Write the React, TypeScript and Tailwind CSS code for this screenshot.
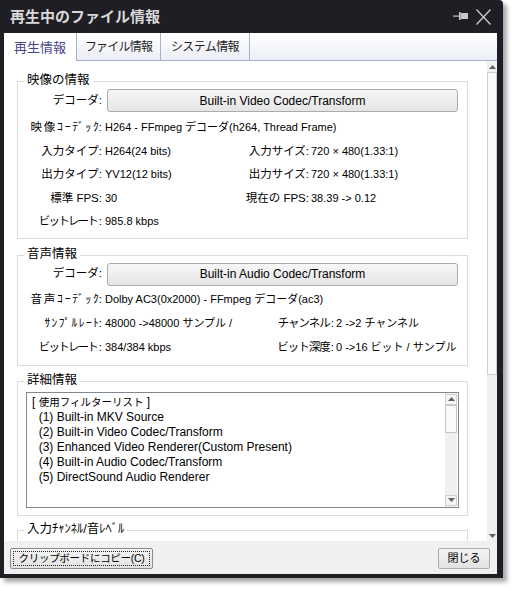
import React from "react";

function UpTri() {
  return (
    <svg width="7" height="4" viewBox="0 0 7 4">
      <path d="M0 4 L3.5 0 L7 4 Z" fill="#606060" />
    </svg>
  );
}
function DownTri() {
  return (
    <svg width="7" height="4" viewBox="0 0 7 4">
      <path d="M0 0 L7 0 L3.5 4 Z" fill="#606060" />
    </svg>
  );
}

function GroupBox({
  title,
  className,
  children,
}: {
  title: string;
  className: string;
  children?: React.ReactNode;
}) {
  return (
    <div className={"relative border border-[#dcdcdc] w-[451px] ml-[13px] shrink-0 " + className}>
      <span className="absolute left-[6px] -top-[10px] px-[3px] bg-white text-[12.5px] leading-[17px] text-black whitespace-nowrap">
        {title}
      </span>
      {children}
    </div>
  );
}

function DecoderRow({ text }: { text: string }) {
  return (
    <div className="flex items-center pt-[7px]">
      <span className="w-[84px] shrink-0 text-right text-[11.5px] leading-none">デコーダ:</span>
      <div className="ml-[5px] w-[351px] h-[23px] border border-[#acacac] rounded-[3px] bg-gradient-to-b from-[#f7f7f7] to-[#e5e5e5] flex items-center justify-center text-[12px] leading-none">
        {text}
      </div>
    </div>
  );
}

export default function App() {
  return (
    <div className="w-[512px] h-[591px] bg-white font-['Liberation_Sans','Noto_Sans_CJK_JP',sans-serif] text-black overflow-hidden">
      <div className="w-[503px] h-[578px] bg-[#1e1e24] rounded-tr-[4px] flex flex-col shadow-[4px_4px_4px_rgba(0,0,0,0.35)]">
        {/* Title bar */}
        <div className="h-[33px] shrink-0 flex items-center pl-[10px] pr-[12px]">
          <span className="text-[15px] font-bold text-[#d8d8d8] leading-none">再生中のファイル情報</span>
          <div className="ml-auto flex items-center gap-[8px]">
            <svg width="15" height="8" viewBox="0 0 15 8" className="mt-[-1px]">
              <rect x="0" y="3.5" width="6" height="1.2" fill="#c8c8c8" />
              <rect x="6" y="0" width="1.6" height="8" fill="#c8c8c8" />
              <rect x="7.6" y="1" width="7.4" height="6" fill="#c8c8c8" />
            </svg>
            <svg width="15" height="16" viewBox="0 0 15 16">
              <path d="M0.5 0.5 L14.5 15.5 M14.5 0.5 L0.5 15.5" stroke="#c8c8c8" strokeWidth="1.4" />
            </svg>
          </div>
        </div>

        {/* Client */}
        <div className="flex-1 min-h-0 ml-[4px] mr-[6px] mb-[4px] bg-white flex flex-col">
          {/* Tabs */}
          <div className="h-[28px] shrink-0 flex border-b border-[#a8b0c4] bg-gradient-to-b from-white to-[#eceef6]">
            <div className="w-[73px] h-[28px] bg-white border-r border-[#a8b0c4] flex items-center justify-center text-[13px] leading-none text-[#45458a]">
              再生情報
            </div>
            <div className="w-[84px] h-[27px] border-r border-[#a8b0c4] flex items-center justify-center text-[12px] tracking-[-0.8px] leading-none text-[#1e1e1e]">
              ファイル情報
            </div>
            <div className="w-[89px] h-[27px] border-r border-[#a8b0c4] flex items-center justify-center text-[12px] tracking-[-0.6px] leading-none text-[#1e1e1e]">
              システム情報
            </div>
          </div>

          {/* Content + scrollbar */}
          <div className="flex-1 min-h-0 flex">
            <div className="flex-1 overflow-hidden bg-white flex flex-col">
              {/* 映像の情報 */}
              <GroupBox title="映像の情報" className="mt-[20px] pb-[4px]">
                <DecoderRow text="Built-in Video Codec/Transform" />
                <div className="mt-[4px] flex flex-col whitespace-nowrap">
                  <div className="h-[23.5px] flex items-center">
                    <span className="w-[84px] shrink-0 text-right text-[11.5px] leading-none">
                      <span className="tracking-[1.8px]">映像ｺｰﾃﾞｯ</span>ｸ:
                    </span>
                    <span className="ml-[3px] text-[11px] leading-none">H264 - FFmpeg デコーダ(h264, Thread Frame)</span>
                  </div>
                  <div className="h-[23.5px] flex items-center">
                    <div className="w-[212px] shrink-0 flex items-center">
                      <span className="w-[84px] shrink-0 text-right text-[11.5px] leading-none">入力タイプ:</span>
                      <span className="ml-[3px] text-[11px] leading-none">H264(24 bits)</span>
                    </div>
                    <span className="w-[79px] shrink-0 text-right text-[11.5px] leading-none">入力サイズ:</span>
                    <span className="ml-[2px] text-[11px] leading-none">720 × 480(1.33:1)</span>
                  </div>
                  <div className="h-[23.5px] flex items-center">
                    <div className="w-[212px] shrink-0 flex items-center">
                      <span className="w-[84px] shrink-0 text-right text-[11.5px] leading-none">出力タイプ:</span>
                      <span className="ml-[3px] text-[11px] leading-none">YV12(12 bits)</span>
                    </div>
                    <span className="w-[79px] shrink-0 text-right text-[11.5px] leading-none">出力サイズ:</span>
                    <span className="ml-[2px] text-[11px] leading-none">720 × 480(1.33:1)</span>
                  </div>
                  <div className="h-[23.5px] flex items-center">
                    <div className="w-[212px] shrink-0 flex items-center">
                      <span className="w-[84px] shrink-0 text-right text-[11.5px] leading-none">標準 FPS:</span>
                      <span className="ml-[3px] text-[11px] leading-none">30</span>
                    </div>
                    <span className="w-[79px] shrink-0 text-right text-[11.5px] leading-none">現在の FPS:</span>
                    <span className="ml-[2px] text-[11px] leading-none">38.39 -&gt; 0.12</span>
                  </div>
                  <div className="h-[23.5px] flex items-center">
                    <span className="w-[84px] shrink-0 text-right text-[11.5px] leading-none">
                      <span className="tracking-[-1.8px]">ビットレー</span>ト:
                    </span>
                    <span className="ml-[3px] text-[11px] leading-none">985.8 kbps</span>
                  </div>
                </div>
              </GroupBox>

              {/* 音声情報 */}
              <GroupBox title="音声情報" className="mt-[16px] pb-[5px]">
                <DecoderRow text="Built-in Audio Codec/Transform" />
                <div className="mt-[2px] flex flex-col whitespace-nowrap">
                  <div className="h-[24px] flex items-center">
                    <span className="w-[84px] shrink-0 text-right text-[11.5px] leading-none">
                      <span className="tracking-[1.8px]">音声ｺｰﾃﾞｯ</span>ｸ:
                    </span>
                    <span className="ml-[3px] text-[11px] leading-none">Dolby AC3(0x2000) - FFmpeg デコーダ(ac3)</span>
                  </div>
                  <div className="h-[24px] flex items-center">
                    <div className="w-[250px] shrink-0 flex items-center">
                      <span className="w-[84px] shrink-0 text-right text-[11.5px] leading-none">
                        <span className="tracking-[1.4px]">ｻﾝﾌﾟﾙﾚｰ</span>ﾄ:
                      </span>
                      <span className="ml-[3px] text-[11px] leading-none">48000 -&gt;48000 サンプル /</span>
                    </div>
                    <span className="w-[66px] shrink-0 text-right text-[11.5px] leading-none">
                      <span className="tracking-[-1px]">チャンネ</span>ル:
                    </span>
                    <span className="ml-[2px] text-[11px] leading-none">2 -&gt;2 チャンネル</span>
                  </div>
                  <div className="h-[24px] flex items-center">
                    <div className="w-[250px] shrink-0 flex items-center">
                      <span className="w-[84px] shrink-0 text-right text-[11.5px] leading-none">
                        <span className="tracking-[-1.8px]">ビットレー</span>ト:
                      </span>
                      <span className="ml-[3px] text-[11px] leading-none">384/384 kbps</span>
                    </div>
                    <span className="w-[66px] shrink-0 text-right text-[11.5px] leading-none">
                      <span className="tracking-[-1px]">ビット深</span>度:
                    </span>
                    <span className="ml-[2px] text-[11px] leading-none">0 -&gt;16 ビット / サンプル</span>
                  </div>
                </div>
              </GroupBox>

              {/* 詳細情報 */}
              <GroupBox title="詳細情報" className="mt-[15px] pt-[10px] pb-[7px]">
                <div className="ml-[8px] w-[433px] h-[116px] border border-[#828790] bg-white flex">
                  <div className="flex-1 pl-[5px] pt-[2px] text-[12px] leading-[15px] whitespace-pre text-black overflow-hidden">
                    <div>
                      [ <span className="text-[10.5px]">使用フィルターリスト</span> ]
                    </div>
                    <div>{"  (1) Built-in MKV Source"}</div>
                    <div>{"  (2) Built-in Video Codec/Transform"}</div>
                    <div>{"  (3) Enhanced Video Renderer(Custom Present)"}</div>
                    <div>{"  (4) Built-in Audio Codec/Transform"}</div>
                    <div>{"  (5) DirectSound Audio Renderer"}</div>
                  </div>
                  <div className="w-[12px] mr-[1px] bg-[#f0f0f0] flex flex-col">
                    <div className="h-[11px] mt-[1px] border border-[#d0d0d0] bg-[#f4f4f4] flex items-center justify-center">
                      <UpTri />
                    </div>
                    <div className="h-[28px] border border-[#c4c4c4] bg-[#f9f9f9]" />
                    <div className="flex-1" />
                    <div className="h-[11px] mb-[1px] border border-[#d0d0d0] bg-[#f4f4f4] flex items-center justify-center">
                      <DownTri />
                    </div>
                  </div>
                </div>
              </GroupBox>

              {/* 入力ﾁｬﾝﾈﾙ/音ﾚﾍﾞﾙ */}
              <GroupBox title="入力ﾁｬﾝﾈﾙ/音ﾚﾍﾞﾙ" className="mt-[14px] h-[60px]" />
            </div>

            {/* main scrollbar */}
            <div className="w-[10px] bg-[#f0f0f0] flex flex-col">
              <div className="h-[11px] flex items-center justify-center">
                <UpTri />
              </div>
              <div className="h-[303px] border border-[#cfcfcf] bg-[#fafafa]" />
              <div className="flex-1" />
              <div className="h-[11px] flex items-center justify-center">
                <DownTri />
              </div>
            </div>
          </div>

          {/* bottom bar */}
          <div className="h-[33px] shrink-0 bg-[#f0f0f0] flex items-start justify-between">
            <div className="ml-[6px] mt-[7px] w-[143px] h-[21px] p-[2px] border border-[#8c8c8c] rounded-[2px] bg-gradient-to-b from-[#f4f4f4] to-[#e2e2e2]">
              <div className="w-full h-full border border-dotted border-[#222] flex items-center justify-center text-[10.5px] leading-none tracking-[-0.3px] whitespace-nowrap">
                クリップボードにコピー(C)
              </div>
            </div>
            <div className="mr-[7px] mt-[7px] w-[52px] h-[21px] border border-[#acacac] rounded-[2px] bg-gradient-to-b from-[#f4f4f4] to-[#e2e2e2] flex items-center justify-center text-[11px] leading-none">
              閉じる
            </div>
          </div>
        </div>
      </div>
    </div>
  );
}
